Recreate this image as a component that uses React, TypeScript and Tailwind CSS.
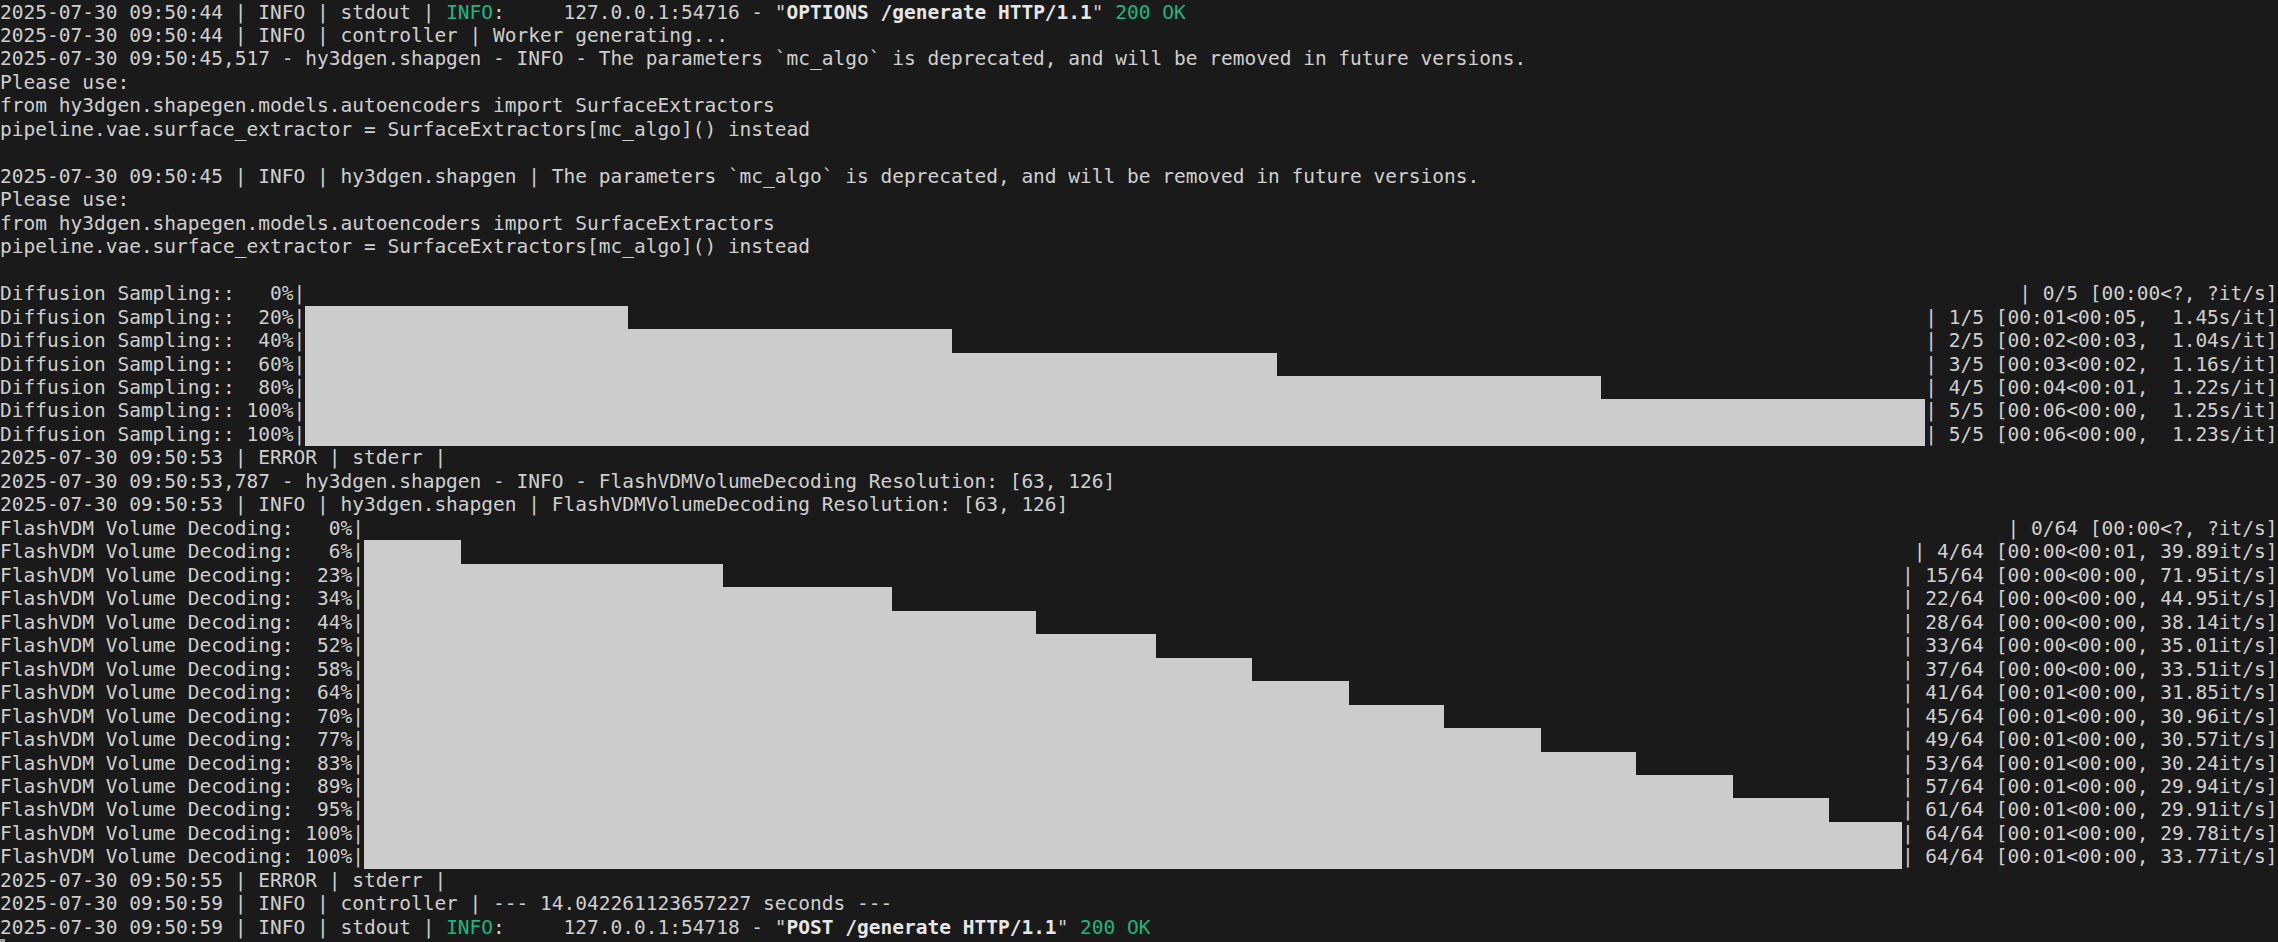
import React from "react";

const CW = 11.74;

type Seg = { t: string; c?: "g"; b?: boolean };
type Line =
  | { kind: "text"; segs: Seg[] }
  | { kind: "bar"; left: string; area: number; filled: number; right: string };

const T = (s: string): Line => ({ kind: "text", segs: [{ t: s }] });

const diff = (pct: string, area: number, filled: number, right: string): Line => ({
  kind: "bar",
  left: `Diffusion Sampling:: ${pct}|`,
  area,
  filled,
  right,
});
const fv = (pct: string, area: number, filled: number, right: string): Line => ({
  kind: "bar",
  left: `FlashVDM Volume Decoding: ${pct}|`,
  area,
  filled,
  right,
});

const lines: Line[] = [
  {
    kind: "text",
    segs: [
      { t: "2025-07-30 09:50:44 | INFO | stdout | " },
      { t: "INFO", c: "g" },
      { t: ":     127.0.0.1:54716 - \"" },
      { t: "OPTIONS /generate HTTP/1.1", b: true },
      { t: "\" " },
      { t: "200 OK", c: "g" },
    ],
  },
  T("2025-07-30 09:50:44 | INFO | controller | Worker generating..."),
  T("2025-07-30 09:50:45,517 - hy3dgen.shapgen - INFO - The parameters `mc_algo` is deprecated, and will be removed in future versions."),
  T("Please use:"),
  T("from hy3dgen.shapegen.models.autoencoders import SurfaceExtractors"),
  T("pipeline.vae.surface_extractor = SurfaceExtractors[mc_algo]() instead"),
  T(""),
  T("2025-07-30 09:50:45 | INFO | hy3dgen.shapgen | The parameters `mc_algo` is deprecated, and will be removed in future versions."),
  T("Please use:"),
  T("from hy3dgen.shapegen.models.autoencoders import SurfaceExtractors"),
  T("pipeline.vae.surface_extractor = SurfaceExtractors[mc_algo]() instead"),
  T(""),
  diff("  0%", 146, 0, "| 0/5 [00:00<?, ?it/s]"),
  diff(" 20%", 138, 27.5, "| 1/5 [00:01<00:05,  1.45s/it]"),
  diff(" 40%", 138, 55.125, "| 2/5 [00:02<00:03,  1.04s/it]"),
  diff(" 60%", 138, 82.75, "| 3/5 [00:03<00:02,  1.16s/it]"),
  diff(" 80%", 138, 110.375, "| 4/5 [00:04<00:01,  1.22s/it]"),
  diff("100%", 138, 138, "| 5/5 [00:06<00:00,  1.25s/it]"),
  diff("100%", 138, 138, "| 5/5 [00:06<00:00,  1.23s/it]"),
  T("2025-07-30 09:50:53 | ERROR | stderr |"),
  T("2025-07-30 09:50:53,787 - hy3dgen.shapgen - INFO - FlashVDMVolumeDecoding Resolution: [63, 126]"),
  T("2025-07-30 09:50:53 | INFO | hy3dgen.shapgen | FlashVDMVolumeDecoding Resolution: [63, 126]"),
  fv("  0%", 140, 0, "| 0/64 [00:00<?, ?it/s]"),
  fv("  6%", 132, 8.25, "| 4/64 [00:00<00:01, 39.89it/s]"),
  fv(" 23%", 131, 30.625, "| 15/64 [00:00<00:00, 71.95it/s]"),
  fv(" 34%", 131, 45, "| 22/64 [00:00<00:00, 44.95it/s]"),
  fv(" 44%", 131, 57.25, "| 28/64 [00:00<00:00, 38.14it/s]"),
  fv(" 52%", 131, 67.5, "| 33/64 [00:00<00:00, 35.01it/s]"),
  fv(" 58%", 131, 75.625, "| 37/64 [00:00<00:00, 33.51it/s]"),
  fv(" 64%", 131, 83.875, "| 41/64 [00:01<00:00, 31.85it/s]"),
  fv(" 70%", 131, 92, "| 45/64 [00:01<00:00, 30.96it/s]"),
  fv(" 77%", 131, 100.25, "| 49/64 [00:01<00:00, 30.57it/s]"),
  fv(" 83%", 131, 108.375, "| 53/64 [00:01<00:00, 30.24it/s]"),
  fv(" 89%", 131, 116.625, "| 57/64 [00:01<00:00, 29.94it/s]"),
  fv(" 95%", 131, 124.75, "| 61/64 [00:01<00:00, 29.91it/s]"),
  fv("100%", 131, 131, "| 64/64 [00:01<00:00, 29.78it/s]"),
  fv("100%", 131, 131, "| 64/64 [00:01<00:00, 33.77it/s]"),
  T("2025-07-30 09:50:55 | ERROR | stderr |"),
  T("2025-07-30 09:50:59 | INFO | controller | --- 14.042261123657227 seconds ---"),
  {
    kind: "text",
    segs: [
      { t: "2025-07-30 09:50:59 | INFO | stdout | " },
      { t: "INFO", c: "g" },
      { t: ":     127.0.0.1:54718 - \"" },
      { t: "POST /generate HTTP/1.1", b: true },
      { t: "\" " },
      { t: "200 OK", c: "g" },
    ],
  },
];

function TextLine({ segs }: { segs: Seg[] }) {
  return (
    <div className="h-[23.47px] whitespace-pre">
      {segs.map((s, i) => (
        <span
          key={i}
          className={
            (s.c === "g" ? "text-[#1cb67f] " : "") + (s.b ? "font-bold text-[#e6e6e6]" : "")
          }
        >
          {s.t}
        </span>
      ))}
    </div>
  );
}

function BarLine({ left, area, filled, right }: { left: string; area: number; filled: number; right: string }) {
  return (
    <div className="flex h-[23.47px] whitespace-pre">
      <span className="shrink-0">{left}</span>
      <div className="h-full shrink-0" style={{ width: area * CW }}>
        <div className="h-full bg-[#cccccc]" style={{ width: filled * CW }} />
      </div>
      <span className="shrink-0">{right}</span>
    </div>
  );
}

export default function App() {
  return (
    <div className="h-[942px] w-full overflow-hidden bg-[#1a1a1a] pt-[0.5px]">
      <div className="w-full font-['DejaVu_Sans_Mono',monospace] text-[19.5px] leading-[23.47px] text-[#cfcfcf]">
        {lines.map((l, i) =>
          l.kind === "text" ? (
            <TextLine key={i} segs={l.segs} />
          ) : (
            <BarLine key={i} left={l.left} area={l.area} filled={l.filled} right={l.right} />
          )
        )}
        <div className="h-[23.47px]">
          <div className="h-full w-[5px] bg-[#9a9a9a]" />
        </div>
      </div>
    </div>
  );
}
